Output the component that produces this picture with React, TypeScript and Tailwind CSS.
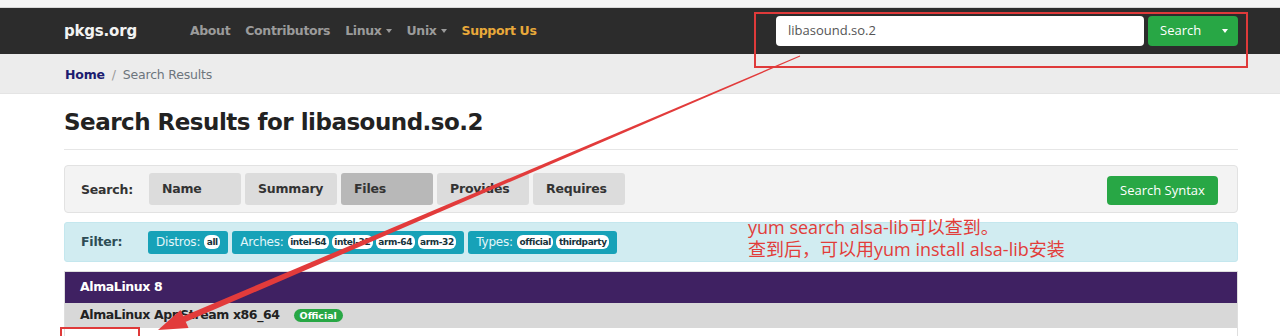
import React from 'react';

const body = { fontFamily: '"DejaVu Sans", Verdana, sans-serif' };
const openSans = { fontFamily: '"Open Sans", sans-serif' };
const note = { fontFamily: '"Open Sans", "Noto Sans CJK SC", sans-serif' };

function Caret() {
  return (
    <span className="ml-1 inline-block border-x-[3.5px] border-t-[4px] border-x-transparent border-t-current align-middle" />
  );
}

function Pill({ children }: { children: React.ReactNode }) {
  return (
    <span className="ml-[3px] rounded-[6px] bg-white px-[2.5px] py-[1px] text-[9px] font-bold leading-[12px] tracking-[-0.4px] text-[#17323a]">
      {children}
    </span>
  );
}

function Group({ label, items }: { label: string; items: string[] }) {
  return (
    <div className="flex h-[23px] items-center rounded-[3px] bg-[#17a2b8] px-[8px] text-[12px] tracking-[-0.2px] text-[#e3f6f9]">
      <span className="mr-[1px]">{label}:</span>
      {items.map((i) => (
        <Pill key={i}>{i}</Pill>
      ))}
    </div>
  );
}

function Annotations() {
  return (
    <svg className="pointer-events-none absolute left-0 top-0" width="1280" height="336">
      <rect x="755" y="13" width="492" height="54" fill="none" stroke="#df3a3a" strokeWidth="2" />
      <rect x="61" y="328" width="78" height="20" fill="none" stroke="#df3a3a" strokeWidth="2" />
      <polygon points="800.2,56.5 799.8,55.5 182.6,316.5 185.4,322" fill="#e23b3b" />
      <polygon points="158,330 180.5,310 188.5,328" fill="#e23b3b" />
    </svg>
  );
}

export default function App() {
  return (
    <div className="relative h-[336px] w-[1280px] overflow-hidden bg-white" style={body}>
      <div className="h-[8px] border-b border-[#d8d8d8] bg-[#f5f5f5]" />

      <nav className="h-[46px] bg-[#2c2c2c]">
        <div className="ml-[64px] flex h-full w-[1174px] items-center">
          <span className="text-[15px] font-bold tracking-[-0.2px] text-[#f2f2f2]">pkgs.org</span>
          <div className="ml-[53px] flex items-center gap-[15px] text-[12.5px] font-bold tracking-[-0.35px] text-[#9b9b9b]">
            <span>About</span>
            <span>Contributors</span>
            <span>
              Linux
              <Caret />
            </span>
            <span>
              Unix
              <Caret />
            </span>
            <span className="text-[#e9a93a]">Support Us</span>
          </div>
          <div className="ml-auto flex items-center gap-[4px]" style={openSans}>
            <div className="flex h-[30px] w-[368px] items-center rounded-[4px] bg-white px-[12px] text-[13px] text-[#555]">
              libasound.so.2
            </div>
            <div className="flex h-[30px] w-[90px] items-center justify-between rounded-[4px] bg-[#28a745] pl-[12px] pr-[10px] text-[13px] text-white">
              <span>Search</span>
              <Caret />
            </div>
          </div>
        </div>
      </nav>

      <div className="h-[40px] border-b border-[#e4e4e4] bg-[#ececec]">
        <div className="ml-[65px] flex h-full items-center pt-[3px] text-[12.5px] tracking-[-0.2px]">
          <span className="font-bold text-[#1c1c70]">Home</span>
          <span className="mx-[7px] text-[#9a9a9a]">/</span>
          <span className="text-[#6c757d]">Search Results</span>
        </div>
      </div>

      <div className="ml-[64px] w-[1174px]">
        <h1 className="mt-[13px] text-[23px] font-bold leading-[30px] tracking-[-0.5px] text-[#222]">
          Search Results for libasound.so.2
        </h1>
        <div className="mt-[12px] border-t border-[#e6e6e6]" />

        <div className="mt-[15px] flex h-[48px] items-center rounded-[4px] border border-[#e2e2e2] bg-[#f3f3f3] pl-[16px] pr-[19px]">
          <span className="w-[68px] pt-[3px] text-[12.5px] font-bold tracking-[-0.2px] text-[#333]">Search:</span>
          <div className="flex gap-[4px] text-[12.5px] font-bold tracking-[-0.2px] text-[#333]">
            {['Name', 'Summary', 'Files', 'Provides', 'Requires'].map((t) => (
              <div
                key={t}
                className={`flex h-[32px] w-[92px] items-center rounded-[3px] pl-[13px] ${t === 'Files' ? 'bg-[#b8b8b8]' : 'bg-[#dcdcdc]'}`}
              >
                {t}
              </div>
            ))}
          </div>
          <div className="ml-auto mt-[3px] flex h-[29px] w-[111px] items-center justify-center rounded-[4px] bg-[#28a745] text-[13px] text-white" style={openSans}>
            Search Syntax
          </div>
        </div>

        <div className="mt-[9px] flex h-[40px] items-center gap-[4px] rounded-[3px] border border-[#c4e7ee] bg-[#d1ecf1] pl-[16px]">
          <span className="w-[63px] text-[12.5px] font-bold tracking-[-0.2px] text-[#2e4c55]">Filter:</span>
          <Group label="Distros" items={['all']} />
          <Group label="Arches" items={['intel-64', 'intel-32', 'arm-64', 'arm-32']} />
          <Group label="Types" items={['official', 'thirdparty']} />
        </div>

        <div className="mt-[9px] border border-[#dedede]">
          <div className="flex h-[31px] items-center bg-[#3f2162] pl-[15px] text-[12.5px] font-bold tracking-[-0.4px] text-white">
            AlmaLinux 8
          </div>
          <div className="flex h-[25px] items-center bg-[#d8d8d8] pl-[15px] text-[12.5px] font-bold tracking-[-0.4px] text-[#222]">
            AlmaLinux AppStream x86_64
            <span className="ml-[14px] rounded-full bg-[#28a745] px-[6px] text-[9.5px] leading-[13px] tracking-normal text-white">
              Official
            </span>
          </div>
          <div className="h-[20px] bg-white" />
        </div>
      </div>

      <div className="absolute left-[748px] top-[216px] text-[18px] leading-[22px] text-[#e23d3a]" style={note}>
        <div>yum search alsa-lib可以查到。</div>
        <div>查到后，可以用yum install alsa-lib安装</div>
      </div>

      <Annotations />
    </div>
  );
}
